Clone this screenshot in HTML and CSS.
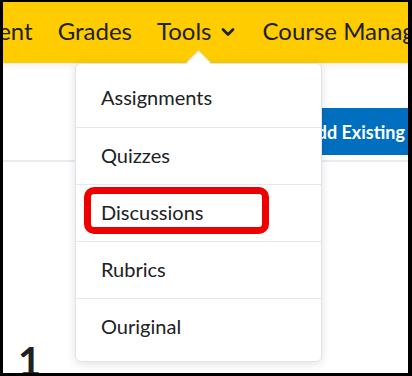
FILE: index.html
```html
<!DOCTYPE html>
<html>
<head>
<meta charset="utf-8">
<link rel="stylesheet" href="styles.css">
</head>
<body>
<div class="frame">
  <header class="navbar">
    <nav class="nav">
      <span class="nav-item">Content</span>
      <span class="nav-item">Grades</span>
      <span class="nav-item nav-open">Tools
        <svg class="chev" width="14" height="10" viewBox="0 0 14 10"><path d="M2 2.5 L7 7.5 L12 2.5" fill="none" stroke="#202122" stroke-width="2.8" stroke-linecap="round" stroke-linejoin="round"/></svg>
      </span>
      <span class="nav-item">Course Management</span>
    </nav>
  </header>
  <main class="content">
    <div class="toolbar">
      <button class="btn-primary">Add Existing</button>
    </div>
    <div class="divider"></div>
    <div class="heading">1</div>
  </main>

  <div class="dropdown">
    <div class="arrow"></div>
    <ul class="menu">
      <li class="menu-item">Assignments</li>
      <li class="menu-item">Quizzes</li>
      <li class="menu-item"><span class="highlight">Discussions</span></li>
      <li class="menu-item">Rubrics</li>
      <li class="menu-item">Ouriginal</li>
    </ul>
  </div>
</div>
</body>
</html>
```

FILE: styles.css
```css
*, *::before, *::after { box-sizing: border-box; }
html, body { margin: 0; padding: 0; background: #fff; }
body { font-family: Lato, "Open Sans", sans-serif; color: #202122; }

.frame {
  position: relative;
  width: 412px;
  height: 376px;
  overflow: hidden;
  border-style: solid;
  border-color: #000;
  border-width: 2px 4px 3px 3px;
  background: #fff;
}

.navbar {
  height: 61px;
  background: #ffcc00;
  display: flex;
  align-items: center;
  overflow: hidden;
}
.nav {
  display: flex;
  align-items: center;
  gap: 25px;
  margin-left: -56px;
  white-space: nowrap;
  font-size: 24px;
  padding-bottom: 5px;
}
.nav-item { display: inline-flex; align-items: center; }
.nav-open { margin-right: 3px; }
.chev { margin-left: 9px; margin-top: 3px; }

.content {
  height: calc(100% - 61px);
  background: linear-gradient(#f3f3f3, #fff 8px);
  position: relative;
}
.toolbar {
  display: flex;
  justify-content: flex-end;
  padding-top: 45px;
}
.btn-primary {
  background: #006fbf;
  color: #fff;
  border: 0;
  border-radius: 4px 0 0 4px;
  font-family: Lato, sans-serif;
  font-weight: bold;
  font-size: 18px;
  height: 47px;
  padding: 0 3px 0 20px;
  white-space: nowrap;
}
.divider {
  height: 2px;
  background: #e8ebf0;
  margin-top: 5px;
}
.heading {
  font-size: 40px;
  font-weight: bold;
  margin: 179px 0 0 15px;
  line-height: 1;
}

.dropdown {
  position: absolute;
  left: 72px;
  top: 61px;
  width: 247px;
}
.arrow {
  position: absolute;
  left: 115px;
  top: -9px;
  width: 17px;
  height: 17px;
  background: #fff;
  border-left: 1px solid #e3e9f1;
  border-top: 1px solid #e3e9f1;
  transform: rotate(45deg);
  z-index: 2;
}
.menu {
  position: relative;
  list-style: none;
  margin: 0;
  padding: 6px 0;
  background: #fff;
  border: 1px solid #dfe4ea;
  border-radius: 6px;
  box-shadow: 0 2px 10px rgba(0,0,0,0.12);
  z-index: 1;
}
.menu-item {
  height: 57px;
  display: flex;
  align-items: center;
  padding: 0 0 3px 25px;
  font-size: 20px;
  border-top: 1px solid #e3e9f1;
  position: relative;
}
.menu-item:first-child { border-top: 0; }
.highlight {
  position: relative;
}
.highlight::before {
  content: "";
  position: absolute;
  left: -17px;
  top: -13px;
  width: 185px;
  height: 47px;
  border: 7px solid #ee0000;
  border-radius: 10px;
}
```
